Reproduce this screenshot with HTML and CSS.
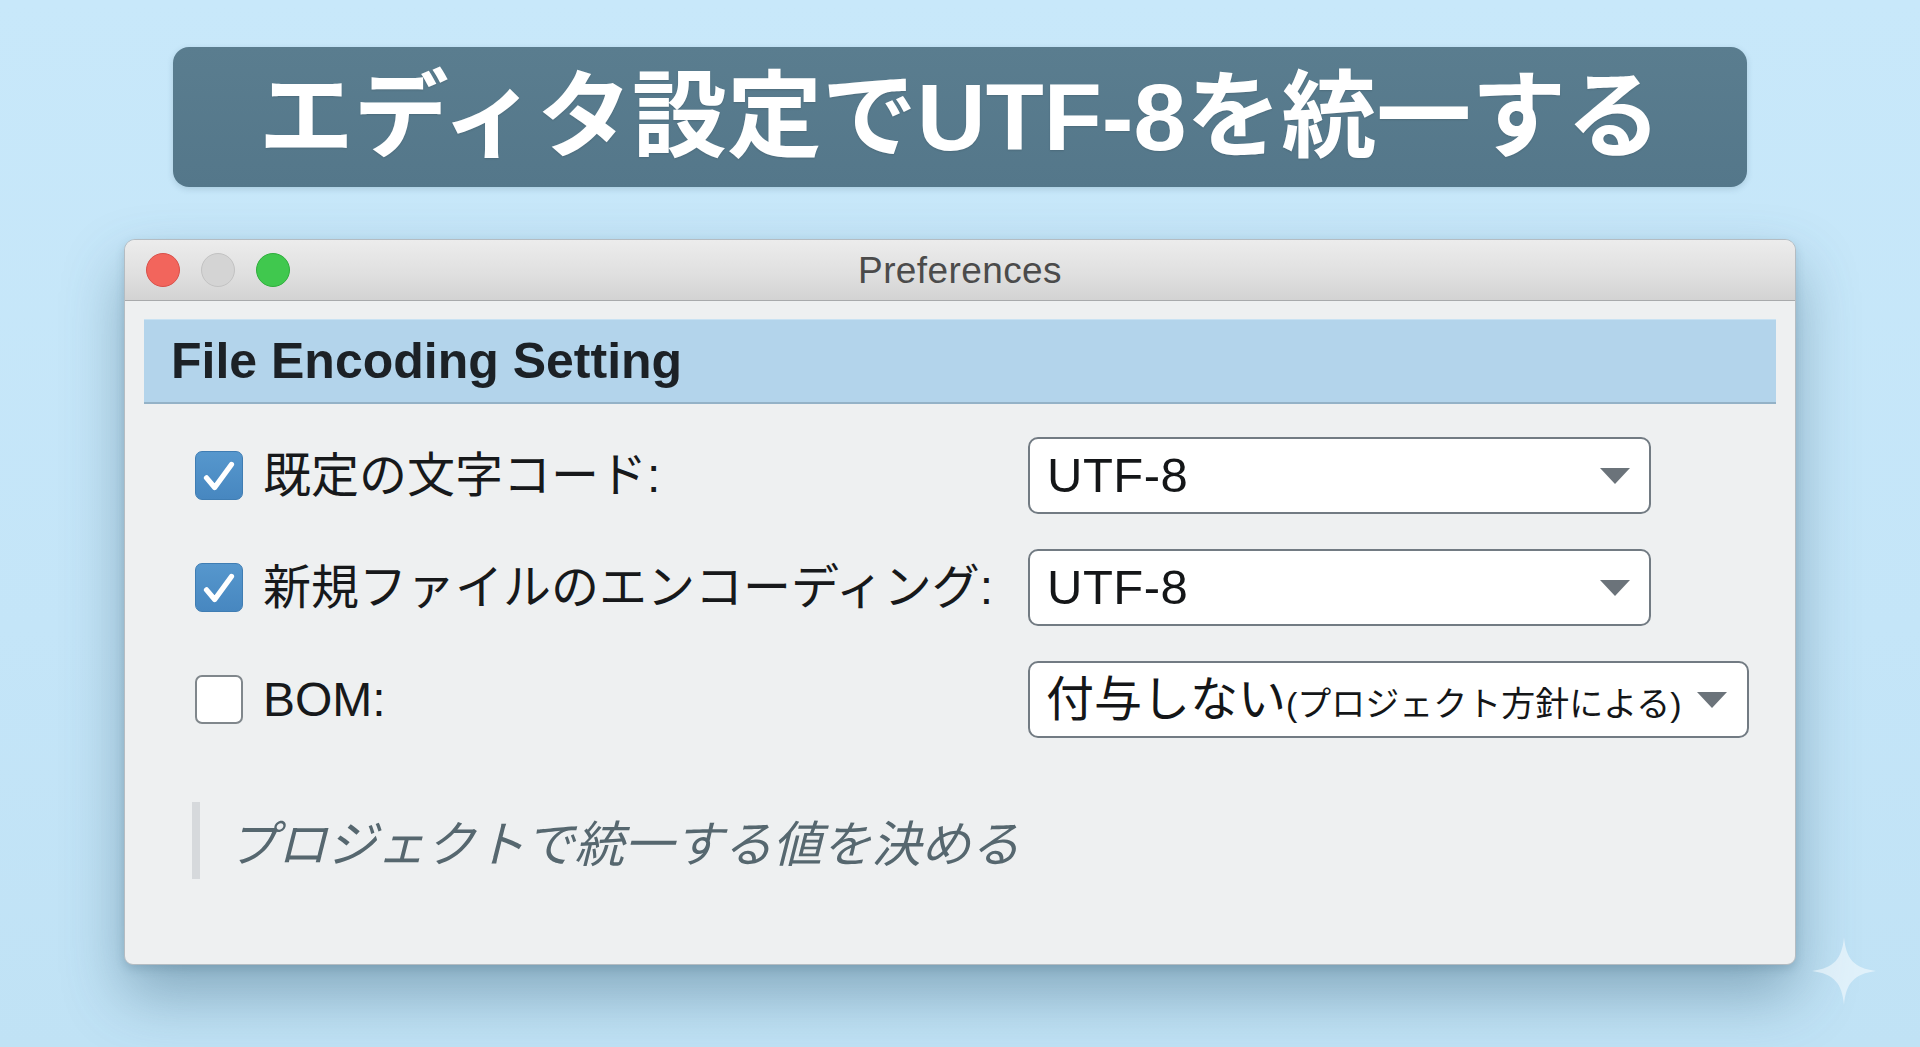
FILE: index.html
```html
<!DOCTYPE html>
<html lang="ja">
<head>
<meta charset="utf-8">
<title>エディタ設定でUTF-8を統一する</title>
<link rel="stylesheet" href="styles.css">
</head>
<body>
<div class="page">
  <div class="banner"><h1 class="banner-title">エディタ設定でUTF-8を統一する</h1></div>

  <div class="window">
    <div class="titlebar">
      <div class="lights">
        <span class="light light-red"></span>
        <span class="light light-gray"></span>
        <span class="light light-green"></span>
      </div>
      <div class="win-title">Preferences</div>
      <div></div>
    </div>

    <div class="win-body">
      <div class="section-head">File Encoding Setting</div>

      <div class="rows">
        <div class="row">
          <div class="label">
            <span class="check checked"><svg viewBox="0 0 48 48" width="48" height="48"><path d="M11 26 L19.5 36 L37 12" fill="none" stroke="#fff" stroke-width="5.5" stroke-linecap="round" stroke-linejoin="round"/></svg></span>
            <span class="label-text">既定の文字コード:</span>
          </div>
          <div class="select select-md">
            <span class="select-value">UTF-8</span>
            <svg class="caret" viewBox="0 0 30 16" width="30" height="16"><path d="M0 0 H30 L15 16 Z" fill="#6b737a"/></svg>
          </div>
        </div>

        <div class="row">
          <div class="label">
            <span class="check checked"><svg viewBox="0 0 48 48" width="48" height="48"><path d="M11 26 L19.5 36 L37 12" fill="none" stroke="#fff" stroke-width="5.5" stroke-linecap="round" stroke-linejoin="round"/></svg></span>
            <span class="label-text">新規ファイルのエンコーディング:</span>
          </div>
          <div class="select select-md">
            <span class="select-value">UTF-8</span>
            <svg class="caret" viewBox="0 0 30 16" width="30" height="16"><path d="M0 0 H30 L15 16 Z" fill="#6b737a"/></svg>
          </div>
        </div>

        <div class="row">
          <div class="label">
            <span class="check"></span>
            <span class="label-text">BOM:</span>
          </div>
          <div class="select select-lg">
            <span class="select-value select-value-jp">付与しない<small class="select-note">(プロジェクト方針による)</small></span>
            <svg class="caret" viewBox="0 0 30 16" width="30" height="16"><path d="M0 0 H30 L15 16 Z" fill="#6b737a"/></svg>
          </div>
        </div>
      </div>

      <div class="note">プロジェクトで統一する値を決める</div>
    </div>
  </div>

  <svg class="sparkle" viewBox="0 0 64 68" width="64" height="68"><path d="M32 0 C34 22 42 31 64 34 C42 37 34 46 32 68 C30 46 22 37 0 34 C22 31 30 22 32 0 Z" fill="#ffffff" fill-opacity="0.5"/></svg>
</div>
</body>
</html>
```

FILE: styles.css
```css
html, body {
  margin: 0;
  padding: 0;
}

body {
  width: 1920px;
  height: 1047px;
  overflow: hidden;
  background: linear-gradient(180deg, #c8e8fa 0%, #c4e5f8 60%, #c0e2f5 100%);
  font-family: "Liberation Sans", "Noto Sans CJK JP", sans-serif;
  color: #1b1f23;
}

.page {
  position: relative;
  height: 100%;
  display: flex;
  flex-direction: column;
  align-items: center;
  padding-top: 47px;
  box-sizing: border-box;
}

/* Banner */
.banner {
  width: 1574px;
  height: 140px;
  border-radius: 16px;
  background: linear-gradient(180deg, #5a7d8f 0%, #54778a 100%);
  box-shadow: 0 2px 6px rgba(40, 80, 100, 0.18);
  display: flex;
  align-items: center;
  justify-content: center;
}

.banner-title {
  margin: 0;
  font-family: "Liberation Sans", "Noto Sans CJK JP", sans-serif;
  font-weight: 700;
  font-size: 95px;
  line-height: 1;
  color: #ffffff;
  white-space: nowrap;
  text-shadow: 0 1px 2px rgba(0, 0, 0, 0.12);
}

/* Window */
.window {
  margin-top: 52px;
  width: 1672px;
  height: 726px;
  box-sizing: border-box;
  border: 1px solid #b4bcc2;
  border-radius: 11px 11px 9px 9px;
  background: #eef0f1;
  box-shadow: 0 30px 60px rgba(50, 90, 115, 0.42), 0 4px 10px rgba(50, 90, 115, 0.2);
  overflow: hidden;
  display: flex;
  flex-direction: column;
}

.titlebar {
  height: 61px;
  box-sizing: border-box;
  border-bottom: 1px solid #a8aaac;
  background: linear-gradient(180deg, #ececec 0%, #e0e0e0 55%, #d3d3d3 100%);
  display: grid;
  grid-template-columns: 1fr auto 1fr;
  align-items: center;
}

.lights {
  display: flex;
  gap: 21px;
  padding-left: 21px;
}

.light {
  width: 34px;
  height: 34px;
  border-radius: 50%;
  box-sizing: border-box;
}

.light-red {
  background: #f2655c;
  border: 1px solid #d8504a;
}

.light-gray {
  background: #d4d4d4;
  border: 1px solid #c2c2c2;
}

.light-green {
  background: #40c84e;
  border: 1px solid #2fae3c;
}

.win-title {
  font-family: "Liberation Sans", sans-serif;
  font-size: 37px;
  letter-spacing: 0.4px;
  color: #4b4b4b;
  line-height: 1;
}

.win-body {
  flex: 1;
  padding: 18px 19px 0 19px;
}

.section-head {
  height: 85px;
  box-sizing: border-box;
  padding-left: 27px;
  display: flex;
  align-items: center;
  background: #b3d4eb;
  border-top: 1px solid #c8e2f3;
  border-bottom: 2px solid #94b2c7;
  font-family: "Liberation Sans", sans-serif;
  font-weight: 700;
  font-size: 50px;
  color: #1c2126;
}

.rows {
  margin-top: 33px;
  padding-left: 51px;
  display: flex;
  flex-direction: column;
  gap: 35px;
}

.row {
  display: flex;
  align-items: center;
  height: 77px;
}

.label {
  width: 833px;
  display: flex;
  align-items: center;
  gap: 20px;
}

.check {
  width: 48px;
  height: 49px;
  flex: none;
  box-sizing: border-box;
  border-radius: 7px;
  background: #ffffff;
  border: 2px solid #80878c;
  display: flex;
  align-items: center;
  justify-content: center;
}

.check.checked {
  background: linear-gradient(180deg, #5697cd 0%, #4787c0 100%);
  border: 1px solid #3f7db3;
}

.check svg {
  display: block;
}

.label-text {
  font-size: 48px;
  line-height: 1;
  color: #17191b;
  white-space: nowrap;
}

.select {
  height: 77px;
  box-sizing: border-box;
  border: 2px solid #727b83;
  border-radius: 10px;
  background: #ffffff;
  display: flex;
  align-items: center;
  justify-content: space-between;
  padding: 0 19px 0 17px;
}

.select-md {
  width: 623px;
}

.select-lg {
  width: 721px;
  padding-left: 16px;
  padding-right: 20px;
}

.select-value {
  font-size: 49px;
  letter-spacing: 0.5px;
  line-height: 1;
  color: #141618;
  white-space: nowrap;
}

.select-value-jp {
  font-size: 48px;
  letter-spacing: 0;
}

.select-note {
  font-size: 34px;
}

.caret {
  display: block;
  flex: none;
}

.note {
  margin-top: 64px;
  margin-left: 48px;
  height: 77px;
  box-sizing: border-box;
  border-left: 8px solid #d6d9dc;
  padding-left: 28px;
  display: flex;
  align-items: center;
  font-family: "Noto Sans CJK JP", sans-serif;
  font-style: italic;
  font-size: 49.5px;
  color: #56676f;
}

.sparkle {
  position: absolute;
  left: 1812px;
  top: 937px;
}
```
